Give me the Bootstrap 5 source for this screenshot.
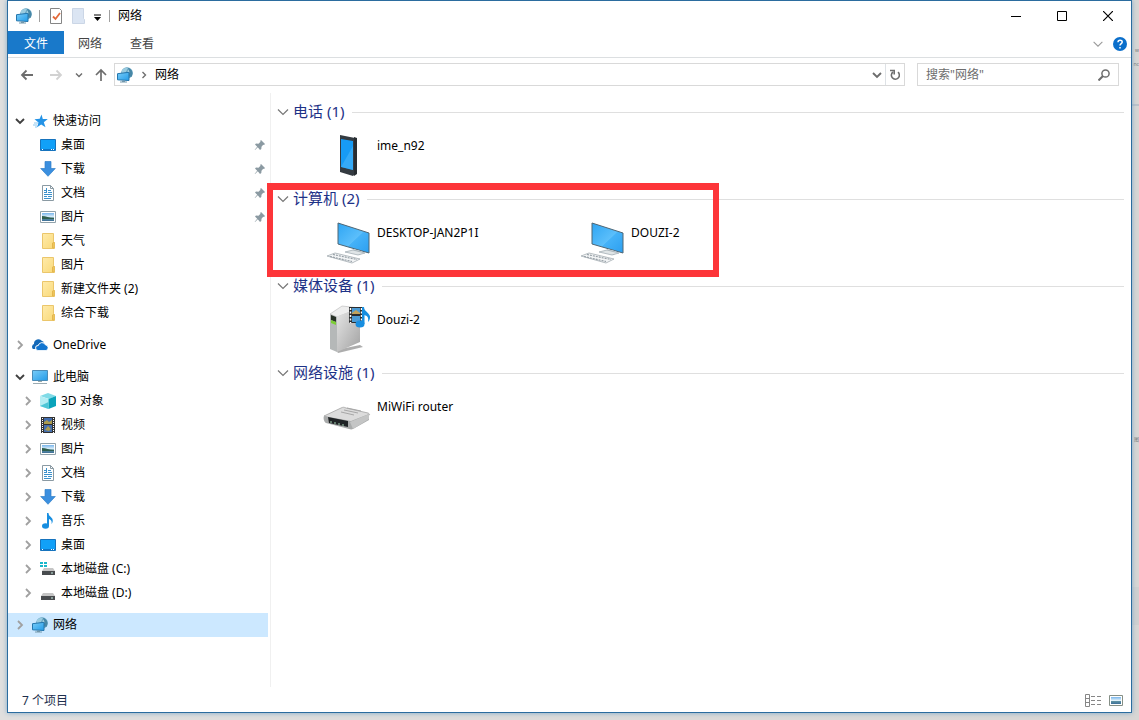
<!DOCTYPE html>
<html lang="zh-CN">
<head>
<meta charset="utf-8">
<meta name="viewport" content="width=device-width, initial-scale=1">
<title>网络</title>
<link href="https://cdn.jsdelivr.net/npm/bootstrap@5.3.0/dist/css/bootstrap.min.css" rel="stylesheet">
<style>
  body { font: 12px/16px "Noto Sans", "Noto Sans CJK SC", sans-serif; color: #000; background: #dedddc; overflow: hidden; }
  button { border: 0; padding: 0; background: transparent; color: inherit; }
  a { color: inherit; text-decoration: none; }
  svg { display: block; flex: none; }
  .desk { padding: 0 7px 7px; background: linear-gradient(#d0d0d0 0 0) right 587px / 7px 38px no-repeat, linear-gradient(#bcc2ca 0 0) right 104px / 7px 2px no-repeat, linear-gradient(90deg, #e0dfde, #d8d6d4); }
  .behind { right: 0; color: #777; font-size: 5px; line-height: 8px; white-space: nowrap; }
  .win { border: 1px solid #2b6c9f; background: #fff; box-shadow: 0 0 5px #7fa9c8; }
  .titlebar { height: 29px; padding-left: 8px; }
  .titlebar > button { margin-left: 6px; }
  .sep { width: 1px; height: 12px; background: #a0a0a0; margin-left: 7px; }
  .winbtn { width: 46px; height: 28px; display: flex; align-items: center; justify-content: center; }
  .tabs { height: 28px; padding-top: 1px; border-bottom: 1px solid #dcdfe1; color: #444; padding-right: 4px; }
  .tabs .tab { height: 23px; padding: 2px 14px 0; }
  .tabs .tab-file { width: 56px; background: #1979ca; color: #fff; }
  .bar { height: 35px; padding: 0 12px 2px 8px; color: #6d6d6d; }
  .box { height: 23px; border: 1px solid #d9d9d9; background: #fff; }
  .search { width: 202px; margin-left: 12px; }
  .search input { border: 0; outline: 0; background: none; padding: 0 8px; min-width: 0; }
  .search input::placeholder { color: #6d6d6d; opacity: 1; }
  .steps { gap: 5px; padding-left: 3px; margin-right: 6px; }
  .place { gap: 5px; padding-left: 2px; }
  .tree { width: 263px; border-right: 1px solid #f0f0f0; padding: 16px 2px 0 0; }
  .tree ul { margin: 0 0 8px; padding: 0; list-style: none; }
  .line { height: 24px; display: flex; align-items: center; padding-left: 4px; padding-right: 2px; }
  .sub .line { padding-left: 12px; }
  .line a { display: flex; align-items: center; gap: 5px; flex: 1; white-space: nowrap; }
  .twist { width: 16px; height: 16px; margin-right: 4px; color: #a0a0a0; flex: none; }
  .twist.open { color: #404040; }
  .picked { background: #cce8ff; }
  .content { padding: 7px 7px 0 4px; }
  .grp { position: relative; }
  .grp h2 { font-size: 15px; line-height: 22px; height: 24px; margin: 0; font-weight: 400; color: #1e3287; display: flex; align-items: center; }
  .grp h2 span { height: 24px; margin-left: 2px; }
  .grp h2::after { content: ""; flex: 1; height: 1px; background: #dfdfdf; margin-left: 8px; }
  .grp h2 svg { color: #777; }
  .items { padding: 7px 0 8px 48px; }
  .thing { width: 254px; display: flex; gap: 6px; }
  .thing span { padding-top: 7px; }
  .thing, .line a { color: #000; }
  .callout { position: absolute; left: -8px; top: -4px; width: 452px; height: 94px; border: 7px solid #fd3539; border-width: 7px 6px; pointer-events: none; }
  .status { height: 25px; padding: 2px 8px 0 14px; color: #1e2f4d; }
</style>
</head>
<body>
<svg width="0" height="0" class="position-absolute" aria-hidden="true">
  <defs>
    <linearGradient id="blue" x1="0" y1="0" x2="1" y2="1"><stop offset="0" stop-color="#79cdf8"/><stop offset="1" stop-color="#239be8"/></linearGradient>
    <linearGradient id="screen" x1="0" y1="0" x2="1" y2="1"><stop offset="0" stop-color="#2ea5f3"/><stop offset=".55" stop-color="#5cbffb"/><stop offset=".56" stop-color="#45b2f8"/><stop offset="1" stop-color="#2c9ff0"/></linearGradient>
    <linearGradient id="gold" x1="0" y1="0" x2="1" y2="1"><stop offset="0" stop-color="#ffebab"/><stop offset="1" stop-color="#f9d978"/></linearGradient>
    <linearGradient id="metal" x1="0" y1="0" x2="1" y2="1"><stop offset="0" stop-color="#e8e8e8"/><stop offset="1" stop-color="#a2a2a2"/></linearGradient>
    <linearGradient id="sky" x1="0" y1="0" x2="0" y2="1"><stop offset="0" stop-color="#78b5ec"/><stop offset=".5" stop-color="#e2f2fa"/><stop offset=".6" stop-color="#5f93a4"/><stop offset="1" stop-color="#3d6f98"/></linearGradient>
  </defs>
  <symbol id="net" viewBox="0 0 16 16"><circle cx="10" cy="6" r="5.800" fill="#5b9cbd"/><path d="M5 3c2-2 4-2.500 6-2l-2 4-4 2z" fill="#9acbdf"/><path d="M11 1c4 1 5.500 5 3.500 9l-2.500-1z" fill="#4787a6"/><path d="M11 2l1.500 3-1 2-1-2z" fill="#b4dae6"/><path d="M.5 6.700l11.500-1.400v8.200l-11.500-.7z" fill="url(#blue)" stroke="#2476ad"/><path d="M5 13.500h3v1h2v1H3v-1h2z" fill="#7297ac"/></symbol>
  <symbol id="star" viewBox="0 0 16 16"><path d="M9.500 1.500l1.300 4.500 5 0-4 3.300 1.700 5-4.300-2.800-4.200 2.800 1.500-4.800L2.500 6.300l5.200-.5z" fill="#2493e6"/><path d="M2 10h4M1 12h4M3 14h2" stroke="#8ac7f0"/></symbol>
  <symbol id="desktop" viewBox="0 0 16 16"><path d="M.5 2.500h15v11H.5z" fill="#11a0f8" stroke="#1673bd"/><path d="M1 12.500h14" stroke="#0d75c8"/><path d="M2 12.500h1M11 12.500h1M13 12.500h1" stroke="#fff"/></symbol>
  <symbol id="down" viewBox="0 0 16 16"><path d="M5 .5h6v7h4.300L8 15.300.7 7.500H5z" fill="#3b8fdf" stroke="#3180c9" stroke-width=".7"/></symbol>
  <symbol id="doc" viewBox="0 0 16 16"><path d="M2.500.5h8l3 3v12h-11z" fill="#fff" stroke="#8b9aa3"/><path d="M10.500.5v3h3" fill="none" stroke="#8b9aa3"/><path d="M4 5.500h3M8 5.500h3M4 7.500h3M8 7.500h4M4 9.500h8M4 11.500h3M8 11.500h4M4 13.500h7" stroke="#3b91cc"/><path d="M6.500 3v5" stroke="#3b91cc"/></symbol>
  <symbol id="pic" viewBox="0 0 16 16"><path d="M.5 2.500h15v11H.5z" fill="#fff" stroke="#91a2ab"/><path d="M2 4h12v8H2z" fill="url(#sky)"/><path d="M2 7c4 0 7 2 12 2v1H2z" fill="#2f5f4e"/></symbol>
  <symbol id="folder" viewBox="0 0 16 16"><path d="M2.500.5h11v8l1 1v6h-12z" fill="url(#gold)" stroke="#ebc66b"/><path d="M12.500 15v-5l1.500-1v6z" fill="#f6d26a" stroke="#e4b64c"/></symbol>
  <symbol id="cloud" viewBox="0 0 16 16"><path d="M1 12a3 3 0 0 1 1-5 4.500 4.500 0 0 1 8-3 3 3 0 0 1 2 1.500C8 5 6.500 7 6 8c-3 .5-3 3-2.500 4z" fill="#1469b8"/><path d="M6 13.500a2.500 2.500 0 0 1 .3-5A3.800 3.800 0 0 1 13.500 8a2.800 2.800 0 0 1 .5 5.500z" fill="#1275d0" stroke="#fff" stroke-width=".8"/></symbol>
  <symbol id="pc" viewBox="0 0 16 16"><path d="M.5 1.500h15v10H.5z" fill="url(#blue)" stroke="#4b8cb7"/><path d="M6 12h4v1H6z" fill="#9aa"/><path d="M1 14.500h14" stroke="#9babb2"/></symbol>
  <symbol id="cube" viewBox="0 0 16 16"><path d="M0 3l8-3 8 3-7 3z" fill="#80dbe7"/><path d="M0 3l8.500 3v10L0 13z" fill="#b4edf3"/><path d="M8.500 6L16 3v10l-7.500 3z" fill="#0aa3ba"/><path d="M0 13l8.500-4v7z" fill="#4ec6d6"/></symbol>
  <symbol id="film" viewBox="0 0 16 16"><path d="M1 0h14v16H1z" fill="#333"/><path d="M4 1h8v6H4z" fill="#426daf"/><path d="M4 8h8v7H4z" fill="#456fae"/><path d="M4 5l3-2 2 2 3-2v4H4zM5 13l3-4 3 3-2 2z" fill="#ac9c4e"/><path d="M2.500 1v15M13.500 1v15" stroke="#fff" stroke-dasharray="1 1"/></symbol>
  <symbol id="note" viewBox="0 0 16 16"><ellipse cx="5.500" cy="13" rx="3.500" ry="2.800" fill="#178ee0"/><path d="M7 0h1.500c0 4 5 4 4.200 8.500-.2 1.200-.7 2-1.200 2.500.7-3-.5-4-2.500-5v7H7z" fill="#178ee0"/></symbol>
  <symbol id="disk" viewBox="0 0 16 16"><path d="M3 8h10l2 3H1z" fill="#c5c5c5"/><path d="M1 11h14v4H1z" fill="#484b4e"/><path d="M11 13h2" stroke="#c5eee0"/></symbol>
  <symbol id="diskc" viewBox="0 0 16 16"><path d="M0 1h3v2H0zM4 1h3v2H4zM0 4h3v2H0zM4 4h3v2H4z" fill="#19b7cb"/><path d="M4 7h9l2 3H2z" fill="#c5c5c5"/><path d="M2 10h13v4H2z" fill="#484b4e"/><path d="M11 12h2" stroke="#c5eee0"/></symbol>
  <symbol id="pin" viewBox="0 0 12 12"><path d="M7 1l4 4-1 1-.8-.2L7.500 7.700 7.300 10 6 11 3.800 8.300 1 11l-.3-.3 2.500-3L1 5.500 2 4.500l2.500.2 2-2L6.200 2z" fill="#8b9aa2"/></symbol>
  <symbol id="right" viewBox="0 0 16 16"><path d="M6 4l4 4-4 4" fill="none" stroke="currentColor" stroke-width="1.800"/></symbol>
  <symbol id="chev" viewBox="0 0 16 16"><path d="M4 6l4 4 4-4" fill="none" stroke="currentColor" stroke-width="1.900"/></symbol>
  <symbol id="thin" viewBox="0 0 16 16"><path d="M3 5.500l5 5 5-5" fill="none" stroke="currentColor" stroke-width="1.200"/></symbol>
  <symbol id="arrow" viewBox="0 0 16 16"><path d="M14 8H3M7.500 3.500L3 8l4.500 4.500" fill="none" stroke="currentColor" stroke-width="1.800"/></symbol>
  <symbol id="computer" viewBox="0 0 48 48"><path d="M15 5l31 10v20l-31-9z" fill="url(#screen)" stroke="#4e6675"/><path d="M30 31l-1 4 8 2 1-4z" fill="#c7cdd0"/><path d="M22 34l8-2 12 3-7 2z" fill="#e0e5e7" stroke="#9ba6ad" stroke-width=".7"/><path d="M4 38l8-3 25 6-8 4z" fill="#f3f5f6" stroke="#a5adb3" stroke-width=".8"/><path d="M7 38.500l22 5M10 36.500l24 5" stroke="#969fa6" stroke-width="1.200" stroke-dasharray="2 1"/></symbol>
</svg>

<div class="desk vh-100 d-flex flex-column position-relative">
  <span class="behind position-absolute" style="top:46px">w</span>
  <span class="behind position-absolute" style="top:60px">nc</span>
  <span class="behind position-absolute" style="top:435px">图</span>
  <div class="win flex-grow-1 d-flex flex-column position-relative">
    <header class="titlebar d-flex align-items-center">
      <svg width="16" height="16"><use href="#net"/></svg>
      <span class="sep"></span>
      <button class="ps-1" aria-label="属性"><svg width="16" height="16" viewBox="0 0 16 16"><path d="M.5.5h9l2 2v13H.5z" fill="#fff" stroke="#858585"/><path d="M3 8.500l2.500 2.500L10 5" fill="none" stroke="#e36a3a" stroke-width="1.800"/></svg></button>
      <button aria-label="新建文件夹"><svg width="14" height="16" viewBox="0 0 14 16"><path d="M.5.500h11v10l1 1v4H.5z" fill="#dbe5f3" stroke="#cbd6e6"/></svg></button>
      <button class="ms-2" aria-label="自定义快速访问工具栏"><svg width="8" height="16" viewBox="0 0 8 16"><path d="M0 7h7" stroke="#000"/><path d="M0 9h7l-3.500 4z"/></svg></button>
      <span class="sep"></span>
      <span class="ms-2">网络</span>
      <div class="d-flex ms-auto">
        <button class="winbtn" aria-label="最小化"><svg width="10" height="10"><path d="M0 5.500h10" stroke="#000"/></svg></button>
        <button class="winbtn" aria-label="最大化"><svg width="10" height="10"><path d="M.5.500h9v9h-9z" fill="none" stroke="#000"/></svg></button>
        <button class="winbtn" aria-label="关闭"><svg width="10" height="10"><path d="M0 0l10 10M10 0L0 10" stroke="#000" stroke-width="1.200"/></svg></button>
      </div>
    </header>
    <nav class="tabs d-flex align-items-start">
      <button class="tab tab-file">文件</button>
      <button class="tab">网络</button>
      <button class="tab">查看</button>
      <div class="ms-auto d-flex align-items-center align-self-center gap-2">
        <button aria-label="展开功能区"><svg width="14" height="14" style="color:#999"><use href="#thin"/></svg></button>
        <button aria-label="帮助"><svg width="14" height="14" viewBox="0 0 14 14"><circle cx="7" cy="7" r="7" fill="#0b6fcb"/><path d="M5 5.200C5 2.500 9.200 2.500 9.200 5c0 1.700-2.200 1.600-2.200 3.600M7 10v1.500" fill="none" stroke="#fff" stroke-width="1.500"/></svg></button>
      </div>
    </nav>
    <div class="bar d-flex align-items-center">
      <div class="steps d-flex align-items-center">
        <button aria-label="后退"><svg width="16" height="16"><use href="#arrow"/></svg></button>
        <button class="ms-2" aria-label="前进"><svg width="16" height="16" style="color:#d2d2d2" transform="rotate(180)"><use href="#arrow"/></svg></button>
        <button class="ms-1" aria-label="最近浏览的位置"><svg width="12" height="12"><use href="#chev"/></svg></button>
        <button class="ms-1" aria-label="向上"><svg width="14" height="16" viewBox="0 0 14 16"><path d="M7 14V3M2 8l5-5 5 5" fill="none" stroke="currentColor" stroke-width="1.700"/></svg></button>
      </div>
      <div class="box place flex-grow-1 d-flex align-items-center">
        <svg width="16" height="16"><use href="#net"/></svg>
        <svg width="12" height="14"><use href="#right"/></svg>
        <a href="#" class="text-black">网络</a>
        <div class="d-flex align-items-center h-100 ms-auto">
          <button aria-label="以前的位置"><svg width="16" height="16"><use href="#chev"/></svg></button>
          <button class="border-start h-100 px-1" aria-label="刷新"><svg width="10" height="14" viewBox="0 0 10 14"><path d="M8 4.200A4 4 0 1 1 3 4" fill="none" stroke="currentColor" stroke-width="1.600"/><path d="M0 2.500h4.200v4" fill="none" stroke="currentColor" stroke-width="1.600"/></svg></button>
        </div>
      </div>
      <div class="box search d-flex align-items-center">
        <input id="q" class="flex-grow-1" type="text" aria-label="搜索" placeholder='搜索"网络"'>
        <button class="me-2" aria-label="开始搜索"><svg width="12" height="12" viewBox="0 0 12 12"><circle cx="7.500" cy="4.500" r="3.600" fill="none" stroke="currentColor" stroke-width="1.500"/><path d="M5 7l-4.500 4.500" stroke="currentColor" stroke-width="2"/></svg></button>
      </div>
    </div>
    <div class="flex-grow-1 d-flex">
      <nav class="tree flex-shrink-0" id="tree"></nav>
      <main class="content flex-grow-1">
        <section class="grp">
          <h2><svg width="16" height="16"><use href="#thin"/></svg><span>电话 (1)</span></h2>
          <div class="items d-flex"><a href="#" class="thing"><svg width="48" height="48" viewBox="0 0 48 48"><path d="M17 4l15 3v36l-2 2-13-4z" fill="#343b41"/><path d="M18 8l12 2v29l-12-3z" fill="#179bf5"/><path d="M18 36L30 15v24z" fill="#54bafa" opacity=".5"/><path d="M31 6l3 1v36l-3 2z" fill="#282d31"/></svg><span>ime_n92</span></a></div>
        </section>
        <section class="grp">
          <h2><svg width="16" height="16"><use href="#thin"/></svg><span>计算机 (2)</span></h2>
          <div class="items d-flex">
            <a href="#" class="thing"><svg width="48" height="48"><use href="#computer"/></svg><span>DESKTOP-JAN2P1I</span></a>
            <a href="#" class="thing"><svg width="48" height="48"><use href="#computer"/></svg><span>DOUZI-2</span></a>
          </div>
          <div class="callout"></div>
        </section>
        <section class="grp">
          <h2><svg width="16" height="16"><use href="#thin"/></svg><span>媒体设备 (1)</span></h2>
          <div class="items d-flex"><a href="#" class="thing"><svg width="48" height="48" viewBox="0 0 48 48"><path d="M13 45l24-5 3 2-25 6z" fill="#777" opacity=".6"/><path d="M7 9L19 1l18 2-23 9z" fill="#eee" stroke="#aaa" stroke-width=".5"/><path d="M13 12l24-9v34l-23 10z" fill="url(#metal)"/><path d="M7 9l7 3v35l-7-3z" fill="#b5b8b8"/><path d="M8 10l5 2v5l-5-2z" fill="#263025"/><path d="M8 15l5 2v3l-5-2z" fill="#7cce35"/><path d="M26 2h14v16H26z" fill="#2b2d2e"/><path d="M29 3h8v6h-8zM29 11h8v6h-8z" fill="#4c9bd4"/><path d="M29 8l4-3 4 3v1h-8z" fill="#c3a35b"/><path d="M27.500 3v15M38.500 3v15" stroke="#fff" stroke-width="1.500" stroke-dasharray="2 1.500"/><ellipse cx="37" cy="19" rx="4.500" ry="3.500" fill="#178ee0"/><path d="M39 2h2c0 5 7 6 6 11-.3 2-1 3-2 4 1-5-1-6-3.500-7v9H39z" fill="#178ee0"/></svg><span>Douzi-2</span></a></div>
        </section>
        <section class="grp">
          <h2><svg width="16" height="16"><use href="#thin"/></svg><span>网络设施 (1)</span></h2>
          <div class="items d-flex"><a href="#" class="thing"><svg width="48" height="48" viewBox="0 0 48 48"><path d="M1 24l17-8c2-1 3-1 5 0l22 5c2 1 2 2 0 3l-18 9z" fill="#dcdcdc" stroke="#999" stroke-width=".7"/><path d="M1 24l27 5 18-7v6L30 37c-2 1-3 0-4 0L3 31c-2-1-3-5-2-7z" fill="#a9abab"/><path d="M27 30l19-8v5L30 37z" fill="#c4c5c5"/><path d="M5 25l20 4v6L6 31z" fill="#202426"/><path d="M8 29v2M12 30v2M16 31v2M20 32v2" stroke="#7a9985" stroke-width="1.500"/><path d="M18 20l13 3M21 18l14 3M24 16l14 3" stroke="#a7a7a7"/></svg><span>MiWiFi router</span></a></div>
        </section>
      </main>
    </div>
    <footer class="status d-flex align-items-center">
      <span>7 个项目</span>
      <button class="ms-auto" aria-label="详细信息"><svg width="16" height="13" viewBox="0 0 16 13"><path d="M.5.500h4v12h-4zM.5 4.500h4M.5 8.500h4M6 2.500h4M12 2.500h4M6 6.500h4M12 6.500h4M6 10.500h4M12 10.500h4" fill="none" stroke="#868686"/></svg></button>
      <button class="ms-2" aria-label="大缩略图"><svg width="14" height="12" viewBox="0 0 14 12"><path d="M.5.500h13v10H.5z" fill="#fff" stroke="#858f86"/><path d="M2 2h10v7H2z" fill="url(#sky)"/></svg></button>
    </footer>
  </div>
</div>
<script src="https://cdn.jsdelivr.net/npm/bootstrap@5.3.0/dist/js/bootstrap.bundle.min.js"></script>
<script>
  const tree = [
    { icon: 'star', text: '快速访问', open: true, kids: [['desktop', '桌面', 1], ['down', '下载', 1], ['doc', '文档', 1], ['pic', '图片', 1], ['folder', '天气'], ['folder', '图片'], ['folder', '新建文件夹 (2)'], ['folder', '综合下载']] },
    { icon: 'cloud', text: 'OneDrive' },
    { icon: 'pc', text: '此电脑', open: true, twist: true, kids: [['cube', '3D 对象'], ['film', '视频'], ['pic', '图片'], ['doc', '文档'], ['down', '下载'], ['note', '音乐'], ['desktop', '桌面'], ['diskc', '本地磁盘 (C:)'], ['disk', '本地磁盘 (D:)']] },
    { icon: 'net', text: '网络', picked: true }
  ];
  const svg = (id, n = 16) => `<svg width="${n}" height="${n}"><use href="#${id}"/></svg>`;
  const row = (icon, text, twist, extra = '', pin = '') =>
    `<div class="line ${extra}">${twist ? `<button class="twist ${twist === 'chev' ? 'open' : ''}" aria-label="展开 ${text}">${svg(twist)}</button>` : '<span class="twist"></span>'}<a href="#">${svg(icon)}<span>${text}</span></a>${pin ? svg('pin', 12) : ''}</div>`;
  document.getElementById('tree').innerHTML = tree.map(t =>
    `<ul><li>${row(t.icon, t.text, t.open ? 'chev' : 'right', t.picked ? 'picked' : '')}</li>` +
    (t.kids || []).map(k => `<li class="sub">${row(k[0], k[1], t.twist ? 'right' : '', '', k[2])}</li>`).join('') + '</ul>').join('');
</script>
</body>
</html>
